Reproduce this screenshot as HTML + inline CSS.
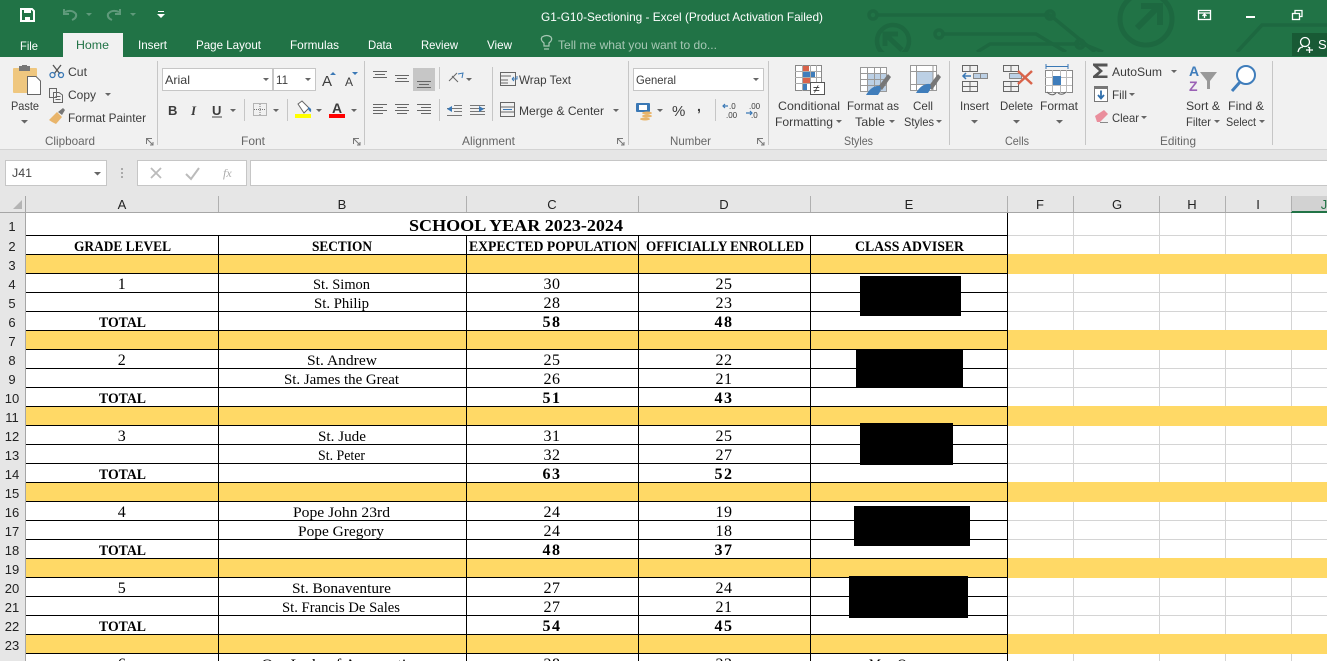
<!DOCTYPE html>
<html><head><meta charset="utf-8"><title>G1-G10-Sectioning - Excel</title>
<style>
html,body{margin:0;padding:0;width:1327px;height:661px;overflow:hidden;background:#fff}
svg{display:block}
text{font-family:"Liberation Sans",Arial,sans-serif;font-size:12px;fill:#444}
.t text{fill:#fff}
.r text{fill:#3c3c3c}
.l text{fill:#666}
.h text{fill:#222;font-size:13px;text-anchor:middle}
.n text{fill:#222;font-size:13px;text-anchor:middle}
.d text{font-family:"Liberation Serif",serif;font-size:15px;fill:#000;text-anchor:middle}
.d text:not([textLength]){font-size:16px;letter-spacing:.5px}
.d .b{font-weight:bold}
.d .b:not([textLength]){font-size:16px;letter-spacing:1.5px}
</style></head><body>
<svg xmlns="http://www.w3.org/2000/svg" width="1327" height="661" viewBox="0 0 1327 661">
<rect width="1327" height="661" fill="#fff"/>
<!-- title bar -->
<rect width="1327" height="57" fill="#217346"/>
<g fill="none" stroke="#1d6840" stroke-width="3.5">
<path d="M877 15H1050L1095 52"/><circle cx="873" cy="15" r="4"/><circle cx="1050" cy="15" r="4"/>
<path d="M943 34H1036L1066 52"/><circle cx="939" cy="34" r="4"/>
<path d="M977 52L990 44H1083L1103 52"/><circle cx="1080" cy="44" r="4"/>
<circle cx="893" cy="41" r="16" stroke-width="4.5"/>
<circle cx="1146" cy="19" r="26" stroke-width="5"/>
<path d="M1137 28L1157 8M1141 6H1160V25" stroke-width="6"/>
<path d="M886 35L902 50M885 46V34H898" stroke-width="5"/>
<path d="M1237 52L1262 25H1327"/>
</g>
<rect x="860" y="52" width="467" height="5" fill="#217346"/>
<!-- save -->
<g fill="none" stroke="#fff" stroke-width="2"><path d="M21 9H32L34 11V21H21Z"/></g>
<rect x="24" y="9" width="7" height="4" fill="#fff"/><rect x="25" y="17" width="5" height="4" fill="#fff"/>
<g fill="none" stroke="#5f9a7b" stroke-width="2"><path d="M65 12Q72 9 76 14Q77 18 72 20M64 9V14H69"/><path d="M119 12Q112 9 108 14Q107 18 112 20M120 9V14H115"/></g>
<g fill="#5f9a7b"><path d="M86 13h6l-3 3zM130 13h6l-3 3z"/></g>
<g fill="#fff"><rect x="158" y="11" width="6" height="1"/><path d="M157 14h8l-4 4z"/></g>
<g class="t">
<text x="541" y="21" textLength="282" lengthAdjust="spacingAndGlyphs">G1-G10-Sectioning - Excel (Product Activation Failed)</text>
<text x="20" y="50" textLength="18" lengthAdjust="spacingAndGlyphs">File</text>
<text x="138" y="49" textLength="29" lengthAdjust="spacingAndGlyphs">Insert</text>
<text x="196" y="49" textLength="65" lengthAdjust="spacingAndGlyphs">Page Layout</text>
<text x="290" y="49" textLength="49" lengthAdjust="spacingAndGlyphs">Formulas</text>
<text x="368" y="49" textLength="24" lengthAdjust="spacingAndGlyphs">Data</text>
<text x="421" y="49" textLength="37" lengthAdjust="spacingAndGlyphs">Review</text>
<text x="487" y="49" textLength="25" lengthAdjust="spacingAndGlyphs">View</text>
</g>
<rect x="63" y="33" width="60" height="24" fill="#f1f1f1"/>
<text x="76" y="49" textLength="33" lengthAdjust="spacingAndGlyphs" style="fill:#217346">Home</text>
<g fill="none" stroke="#a6c7b4" stroke-width="1.2"><path d="M544 46V43Q540 40 542 37Q547 34 551 37Q553 40 549 43V46ZM544 49H549"/></g>
<text x="558" y="49" textLength="159" lengthAdjust="spacingAndGlyphs" style="fill:#a6c7b4">Tell me what you want to do...</text>
<!-- window controls -->
<g fill="none" stroke="#fff" stroke-width="1.3"><rect x="1198.5" y="10.5" width="12" height="9"/><path d="M1198 13H1211"/><path d="M1204.500 18V14M1202.500 16L1204.500 14L1206.500 16"/>
<rect x="1292.500" y="13.500" width="7" height="6"/><path d="M1295 13V10.500H1302V16.500H1300"/></g>
<rect x="1246" y="16" width="9" height="2" fill="#fff"/>
<rect x="1292" y="33" width="35" height="23" fill="#185a35"/>
<g fill="none" stroke="#fff" stroke-width="1.300"><circle cx="1305" cy="42" r="4.500"/><path d="M1298 52Q1299 47 1303 47M1308 47L1310 48M1306 50H1313M1309.500 47V53"/></g>
<text x="1318" y="49" style="fill:#fff;font-size:13px">Sh</text>
<!-- ribbon -->
<rect y="57" width="1327" height="93" fill="#f1f1f1"/>
<rect y="149" width="1327" height="1" fill="#d3d3d3"/>
<rect y="150" width="1327" height="62" fill="#e6e6e6"/>
<g fill="#c6c6c6"><rect x="157" y="61" width="1" height="84"/><rect x="364" y="61" width="1" height="84"/><rect x="628" y="61" width="1" height="84"/><rect x="768" y="61" width="1" height="84"/><rect x="949" y="61" width="1" height="84"/><rect x="1085" y="61" width="1" height="84"/><rect x="1272" y="61" width="1" height="84"/>
<rect x="244" y="99" width="1" height="22"/><rect x="287" y="99" width="1" height="22"/><rect x="439" y="67" width="1" height="22"/><rect x="439" y="99" width="1" height="22"/><rect x="492" y="67" width="1" height="54"/><rect x="715" y="99" width="1" height="22"/></g>
<!-- combos -->
<g fill="#fff" stroke="#c6c6c6"><rect x="162.500" y="68.500" width="110" height="22"/><rect x="273.500" y="68.500" width="42" height="22"/><rect x="633.500" y="68.500" width="130" height="22"/></g>
<rect x="5.500" y="160.500" width="101" height="25" fill="#fff" stroke="#c6c6c6"/>
<!-- clipboard icons -->
<rect x="13" y="68" width="24" height="25" rx="1" fill="#efc77f"/><rect x="19" y="66" width="11" height="5" fill="#777"/><rect x="22" y="65" width="5" height="2" fill="#777"/>
<path d="M27.500 76.500H36L40.500 81V94.500H27.500Z" fill="#fff" stroke="#666"/>
<g fill="none" stroke="#555" stroke-width="1.300"><path d="M53 65L60 74M61 65L54 74"/></g>
<g fill="none" stroke="#3a78b5" stroke-width="1.300"><circle cx="52.500" cy="75" r="2.500"/><circle cx="61" cy="75" r="2.500"/></g>
<g fill="none" stroke="#666"><rect x="49.500" y="88.500" width="7" height="9"/><path d="M53.500 92.500H59L62.500 95V102.500H53.500ZM55.500 96.500H60.500M55.500 99.500H60.500"/></g>
<path d="M49 120L57 112L62 117L56 124L52 122Z" fill="#e9b56b"/><path d="M58 112L63 108L65 110L62 115Z" fill="#777"/>
<g class="r">
<text x="11" y="110" textLength="28" lengthAdjust="spacingAndGlyphs">Paste</text>
<text x="68" y="76" textLength="19" lengthAdjust="spacingAndGlyphs">Cut</text>
<text x="68" y="99" textLength="28" lengthAdjust="spacingAndGlyphs">Copy</text>
<text x="68" y="122" textLength="78" lengthAdjust="spacingAndGlyphs">Format Painter</text>
<text x="165" y="84" textLength="25" lengthAdjust="spacingAndGlyphs">Arial</text>
<text x="276" y="84" textLength="12" lengthAdjust="spacingAndGlyphs">11</text>
<text x="636" y="84" textLength="40" lengthAdjust="spacingAndGlyphs">General</text>
<text x="519" y="84" textLength="52" lengthAdjust="spacingAndGlyphs">Wrap Text</text>
<text x="519" y="115" textLength="85" lengthAdjust="spacingAndGlyphs">Merge &amp; Center</text>
<text x="778" y="110" textLength="62" lengthAdjust="spacingAndGlyphs">Conditional</text>
<text x="775" y="126" textLength="58" lengthAdjust="spacingAndGlyphs">Formatting</text>
<text x="847" y="110" textLength="52" lengthAdjust="spacingAndGlyphs">Format as</text>
<text x="855" y="126" textLength="30" lengthAdjust="spacingAndGlyphs">Table</text>
<text x="913" y="110" textLength="20" lengthAdjust="spacingAndGlyphs">Cell</text>
<text x="904" y="126" textLength="30" lengthAdjust="spacingAndGlyphs">Styles</text>
<text x="960" y="110" textLength="29" lengthAdjust="spacingAndGlyphs">Insert</text>
<text x="1000" y="110" textLength="33" lengthAdjust="spacingAndGlyphs">Delete</text>
<text x="1040" y="110" textLength="38" lengthAdjust="spacingAndGlyphs">Format</text>
<text x="1112" y="76" textLength="50" lengthAdjust="spacingAndGlyphs">AutoSum</text>
<text x="1112" y="99" textLength="15" lengthAdjust="spacingAndGlyphs">Fill</text>
<text x="1112" y="122" textLength="27" lengthAdjust="spacingAndGlyphs">Clear</text>
<text x="1186" y="110" textLength="34" lengthAdjust="spacingAndGlyphs">Sort &amp;</text>
<text x="1186" y="126" textLength="25" lengthAdjust="spacingAndGlyphs">Filter</text>
<text x="1228" y="110" textLength="36" lengthAdjust="spacingAndGlyphs">Find &amp;</text>
<text x="1226" y="126" textLength="30" lengthAdjust="spacingAndGlyphs">Select</text>
</g>
<g class="l">
<text x="45" y="145" textLength="50" lengthAdjust="spacingAndGlyphs">Clipboard</text>
<text x="241" y="145" textLength="24" lengthAdjust="spacingAndGlyphs">Font</text>
<text x="462" y="145" textLength="53" lengthAdjust="spacingAndGlyphs">Alignment</text>
<text x="670" y="145" textLength="41" lengthAdjust="spacingAndGlyphs">Number</text>
<text x="844" y="145" textLength="29" lengthAdjust="spacingAndGlyphs">Styles</text>
<text x="1005" y="145" textLength="24" lengthAdjust="spacingAndGlyphs">Cells</text>
<text x="1160" y="145" textLength="36" lengthAdjust="spacingAndGlyphs">Editing</text>
</g>
<!-- carets -->
<g fill="#666"><path d="M21 120h7l-3.500 3.500zM105 93h6l-3 3zM263 78h6l-3 3zM305 78h6l-3 3zM230 109h6l-3 3zM273 109h6l-3 3zM316 109h6l-3 3zM351 109h6l-3 3zM466 78h6l-3 3zM613 109h6l-3 3zM753 78h6l-3 3zM657 109h6l-3 3zM836 120h6l-3 3zM889 120h6l-3 3zM936 120h6l-3 3zM971 120h7l-3.500 3.500zM1013 120h7l-3.500 3.500zM1056 120h7l-3.500 3.500zM1171 70h6l-3 3zM1129 93h6l-3 3zM1141 116h6l-3 3zM1214 120h6l-3 3zM1259 120h6l-3 3zM94 172h7l-3.500 3.500z"/></g>
<!-- launchers -->
<g fill="none" stroke="#777"><path d="M146.500 144V138.500H152M147 139L153 145M153 142V145H150"/><path d="M353.500 144V138.500H359M354 139L360 145M360 142V145H357"/><path d="M617.500 144V138.500H623M618 139L624 145M624 142V145H621"/><path d="M757.500 144V138.500H763M758 139L764 145M764 142V145H761"/></g>
<!-- font group icons -->
<g class="r" style="font-weight:bold">
<text x="322" y="86" style="font-size:15px;font-weight:normal">A</text><text x="345" y="86" style="font-size:12px;font-weight:normal">A</text>
<text x="168" y="115" style="font-size:13px">B</text><text x="191" y="115" style="font-size:13px;font-style:italic;font-family:'Liberation Serif',serif">I</text><text x="212" y="115" style="font-size:13px">U</text>
<text x="332" y="113" style="font-size:14px">A</text>
<text x="672" y="116" style="font-size:15px;font-weight:normal">%</text><text x="697" y="111" style="font-size:14px">,</text>
</g>
<g fill="#3a78b5"><path d="M330 75l3-3 3 3zM352 72h6l-3 3z"/></g>
<rect x="212" y="116.500" width="10" height="1" fill="#444"/>
<g fill="none" stroke="#777" stroke-dasharray="1 1"><rect x="253.500" y="103.500" width="13" height="12"/><path d="M260 104V115M254 109.500H266"/></g>
<path d="M298 104L302 101L309 108L304 113Z" fill="#fff" stroke="#666"/><path d="M308 107q4 1 3 5q-3-1-3-5z" fill="#3a78b5"/>
<rect x="295" y="114" width="16" height="4" fill="#ff0"/><rect x="329" y="114" width="16" height="4" fill="#f00"/>
<!-- alignment icons -->
<rect x="413" y="68" width="22" height="23" fill="#c6c6c6"/>
<g fill="none" stroke="#666"><path d="M373 71.500H387M375 74.500H385M373 77.500H387M395 75.500H409M397 78.500H407M395 81.500H409M417 81.500H431M419 84.500H429M417 87.500H431"/>
<path d="M373 104.500H387M373 107.500H383M373 110.500H387M373 113.500H383M395 104.500H409M397 107.500H407M395 110.500H409M397 113.500H407M417 104.500H431M421 107.500H431M417 110.500H431M421 113.500H431"/>
<path d="M447 108.500H462M454 105.500H462M454 111.500H462M447 115.500H462M470 105.500H485M470 108.500H485M470 111.500H485M470 114.500H485" stroke="#777"/>
<path d="M449 81L457 73M452 76L458 82"/><path d="M458 74L463 73L462 78" stroke="#3a78b5"/></g>
<g fill="#3a78b5"><path d="M447 109L452 106V112ZM484 109L479 106V112Z"/></g>
<g fill="none" stroke="#666"><rect x="500.500" y="72.500" width="15" height="13"/><path d="M500 76H511M500 80H508M500 83H508"/><rect x="500.500" y="102.500" width="14" height="14"/><path d="M500 107H515M500 112H515"/></g>
<path d="M512 79H517V76M512 79L514 77M512 79L514 81" fill="none" stroke="#3a78b5"/>
<path d="M503 109.500H512" stroke="#3a78b5"/>
<!-- number icons -->
<rect x="636" y="103" width="14" height="9" rx="1" fill="#3a78b5"/><rect x="639" y="105" width="8" height="5" fill="#fff"/>
<ellipse cx="647" cy="113" rx="5" ry="1.500" fill="#e9b56b"/><ellipse cx="647" cy="116" rx="5" ry="1.500" fill="#e9b56b"/><ellipse cx="645" cy="119" rx="5" ry="1.500" fill="#e9b56b"/>
<g class="r"><text x="729" y="109" style="font-size:8px">.0</text><text x="726" y="118" style="font-size:8px">.00</text><text x="749" y="109" style="font-size:8px">.00</text><text x="751" y="118" style="font-size:8px">.0</text></g>
<path d="M728 106H723M725 104L723 106L725 108M746 113H752M750 111L752 113L750 115" fill="none" stroke="#3a78b5" stroke-width="1.200"/>
<!-- styles icons -->
<g fill="#fff" stroke="#888"><rect x="795.500" y="65.500" width="26" height="25"/></g>
<g fill="#d9634a"><rect x="803" y="66" width="6" height="5"/><rect x="803" y="78" width="8" height="5"/></g>
<g fill="#3f7dbb"><rect x="803" y="72" width="12" height="5"/><rect x="803" y="84" width="4" height="6"/></g>
<path d="M795 71.500H821M795 77.500H821M795 83.500H821M802.500 65V91M810.500 65V91M816.500 65V91" stroke="#aaa" fill="none"/>
<rect x="810.500" y="82.500" width="14" height="12" fill="#fff" stroke="#555"/><text x="813" y="93" style="font-size:12px;fill:#333">≠</text>
<rect x="860.500" y="67.500" width="26" height="24" fill="#fff" stroke="#999"/><rect x="868" y="74" width="18" height="17" fill="#bcd0e5"/>
<path d="M860 73.500H887M860 79.500H887M860 85.500H887M867.500 67V92M874.500 67V92M880.500 67V92" stroke="#999" fill="none"/>
<path d="M878 87L888 74L891 77L882 90Z" fill="#777"/><path d="M866 95Q872 85 880 86Q882 90 878 95Z" fill="#3f7dbb"/>
<rect x="910.500" y="65.500" width="26" height="25" fill="#fff" stroke="#999"/><rect x="916" y="71" width="17" height="13" fill="#bcd0e5"/>
<path d="M910 71.500H937M916.500 66V91M910 84.500H937M933 66V91" stroke="#999" fill="none"/>
<path d="M928 87L938 74L941 77L932 90Z" fill="#777"/><path d="M916 93Q922 83 930 84Q932 88 928 93Z" fill="#3f7dbb"/>
<!-- cells icons -->
<g fill="none" stroke="#666" stroke-width="1"><path d="M962.500 65.500H977.500V71.500H962.500ZM970 65V71"/><path d="M962.500 81.500H977.500V91.500H962.500ZM962 86.500H977M970 81V91"/></g>
<rect x="973.500" y="73.500" width="14" height="5" fill="#bcd0e5" stroke="#888"/><path d="M980.500 73V79" stroke="#888"/>
<path d="M971 76H963M966 73L963 76L966 79" fill="none" stroke="#3a78b5" stroke-width="1.500"/>
<g fill="none" stroke="#666"><path d="M1003.500 65.500H1018.500V71.500H1003.500ZM1011 65V71"/><path d="M1003.500 81.500H1018.500V91.500H1003.500ZM1003 86.500H1018M1011 81V91"/></g>
<rect x="1009.500" y="73.500" width="12" height="5" fill="#bcd0e5" stroke="#888"/>
<path d="M1018 71L1032 84M1032 71L1018 84" stroke="#d9634a" stroke-width="2.500"/>
<rect x="1045.500" y="70.500" width="27" height="22" fill="#fff" stroke="#888"/><path d="M1045 77.500H1072M1045 85.500H1072M1052.500 70V93M1060.500 70V93M1066.500 70V93" stroke="#bbb"/>
<rect x="1053" y="76" width="8" height="9" fill="#3f7dbb"/>
<path d="M1046 66.500H1068M1046 64V69M1068 64V69" stroke="#3a78b5" fill="none"/>
<path d="M1047 92Q1052 97 1056 93M1058 93Q1062 96 1066 92" stroke="#666" fill="none"/>
<!-- editing icons -->
<path d="M1093 63.500H1107.500V66.500H1098L1103 71L1098 75.500H1107.500V78H1093V76L1099 71L1093 65.500Z" fill="#555"/>
<rect x="1094.500" y="86.500" width="13" height="15" fill="#fff" stroke="#777"/><rect x="1094" y="86" width="14" height="3" fill="#777"/>
<path d="M1101 90.500V98M1098 95L1101 98.500L1104 95" fill="none" stroke="#2f6eab" stroke-width="1.800"/>
<path d="M1095 116L1104 110L1108 114L1100 122H1097Z" fill="#ea8e9c"/><path d="M1100 122.500H1108" stroke="#888"/>
<text x="1189" y="76" style="font-size:14px;font-weight:bold;fill:#3f7dbb">A</text><text x="1189" y="91" style="font-size:14px;font-weight:bold;fill:#9a61b5">Z</text>
<path d="M1200 72H1217L1210 81V89H1207V81Z" fill="#999"/>
<circle cx="1246" cy="75" r="9" fill="#fff" stroke="#3f7dbb" stroke-width="2"/><path d="M1240 82L1232 91" stroke="#3f7dbb" stroke-width="3"/>
<!-- formula bar -->
<text x="12" y="177" textLength="20" lengthAdjust="spacingAndGlyphs" style="fill:#444">J41</text>
<g fill="#aaa"><rect x="121" y="168" width="2" height="2"/><rect x="121" y="172" width="2" height="2"/><rect x="121" y="176" width="2" height="2"/></g>
<rect x="137.500" y="160.500" width="109" height="25" fill="#fff" stroke="#c6c6c6"/>
<path d="M151 168L161 178M161 168L151 178" stroke="#bbb" stroke-width="1.800"/>
<path d="M186 174L191 179L199 168" fill="none" stroke="#bbb" stroke-width="2"/>
<text x="223" y="177" style="font-family:'Liberation Serif',serif;font-style:italic;font-size:12px;fill:#aaa">fx</text>
<rect x="250.500" y="160.500" width="1080" height="25" fill="#fff" stroke="#c6c6c6"/>
<!-- sheet -->
<rect x="0" y="212" width="25" height="449" fill="#e6e6e6"/>
<rect x="25" y="213" width="1302" height="448" fill="#fff"/>
<rect x="1291" y="196" width="36" height="16" fill="#d2d2d2"/>
<rect x="0" y="212" width="1327" height="1" fill="#a6a6a6"/>
<rect x="1291" y="211" width="36" height="2" fill="#217346"/>
<rect x="25" y="196" width="1" height="465" fill="#a6a6a6"/>
<path d="M22 200V209H13Z" fill="#b4b4b4"/>
<g fill="#b0b0b0"><rect x="218" y="196" width="1" height="16"/><rect x="466" y="196" width="1" height="16"/><rect x="638" y="196" width="1" height="16"/><rect x="810" y="196" width="1" height="16"/><rect x="1007" y="196" width="1" height="16"/><rect x="1073" y="196" width="1" height="16"/><rect x="1159" y="196" width="1" height="16"/><rect x="1225" y="196" width="1" height="16"/><rect x="1291" y="196" width="1" height="16"/></g>
<!-- yellow -->
<g fill="#ffd966"><rect x="26" y="254" width="1301" height="20"/><rect x="26" y="330" width="1301" height="20"/><rect x="26" y="406" width="1301" height="20"/><rect x="26" y="482" width="1301" height="20"/><rect x="26" y="558" width="1301" height="20"/><rect x="26" y="634" width="1301" height="20"/></g>
<!-- light grid -->
<g fill="#d4d4d4">
<rect x="1073" y="213" width="1" height="41"/><rect x="1159" y="213" width="1" height="41"/><rect x="1225" y="213" width="1" height="41"/><rect x="1291" y="213" width="1" height="41"/>
<rect x="1073" y="274" width="1" height="56"/><rect x="1159" y="274" width="1" height="56"/><rect x="1225" y="274" width="1" height="56"/><rect x="1291" y="274" width="1" height="56"/>
<rect x="1073" y="350" width="1" height="56"/><rect x="1159" y="350" width="1" height="56"/><rect x="1225" y="350" width="1" height="56"/><rect x="1291" y="350" width="1" height="56"/>
<rect x="1073" y="426" width="1" height="56"/><rect x="1159" y="426" width="1" height="56"/><rect x="1225" y="426" width="1" height="56"/><rect x="1291" y="426" width="1" height="56"/>
<rect x="1073" y="502" width="1" height="56"/><rect x="1159" y="502" width="1" height="56"/><rect x="1225" y="502" width="1" height="56"/><rect x="1291" y="502" width="1" height="56"/>
<rect x="1073" y="578" width="1" height="56"/><rect x="1159" y="578" width="1" height="56"/><rect x="1225" y="578" width="1" height="56"/><rect x="1291" y="578" width="1" height="56"/>
<rect x="1073" y="654" width="1" height="7"/><rect x="1159" y="654" width="1" height="7"/><rect x="1225" y="654" width="1" height="7"/><rect x="1291" y="654" width="1" height="7"/>
<rect x="1008" y="235" width="319" height="1"/><rect x="1008" y="292" width="319" height="1"/><rect x="1008" y="311" width="319" height="1"/><rect x="1008" y="368" width="319" height="1"/><rect x="1008" y="387" width="319" height="1"/><rect x="1008" y="444" width="319" height="1"/><rect x="1008" y="463" width="319" height="1"/><rect x="1008" y="520" width="319" height="1"/><rect x="1008" y="539" width="319" height="1"/><rect x="1008" y="596" width="319" height="1"/><rect x="1008" y="615" width="319" height="1"/>
</g>
<!-- black grid -->
<g fill="#000">
<rect x="26" y="235" width="981" height="1"/><rect x="26" y="254" width="981" height="1"/><rect x="26" y="273" width="981" height="1"/><rect x="26" y="292" width="981" height="1"/><rect x="26" y="311" width="981" height="1"/><rect x="26" y="330" width="981" height="1"/><rect x="26" y="349" width="981" height="1"/><rect x="26" y="368" width="981" height="1"/><rect x="26" y="387" width="981" height="1"/><rect x="26" y="406" width="981" height="1"/><rect x="26" y="425" width="981" height="1"/><rect x="26" y="444" width="981" height="1"/><rect x="26" y="463" width="981" height="1"/><rect x="26" y="482" width="981" height="1"/><rect x="26" y="501" width="981" height="1"/><rect x="26" y="520" width="981" height="1"/><rect x="26" y="539" width="981" height="1"/><rect x="26" y="558" width="981" height="1"/><rect x="26" y="577" width="981" height="1"/><rect x="26" y="596" width="981" height="1"/><rect x="26" y="615" width="981" height="1"/><rect x="26" y="634" width="981" height="1"/><rect x="26" y="653" width="981" height="1"/>
<rect x="218" y="235" width="1" height="426"/><rect x="466" y="235" width="1" height="426"/><rect x="638" y="235" width="1" height="426"/><rect x="810" y="235" width="1" height="426"/><rect x="1007" y="213" width="1" height="448"/>
</g>
<!-- headers -->
<g class="h">
<text x="122" y="209">A</text><text x="342" y="209">B</text><text x="552" y="209">C</text><text x="724" y="209">D</text><text x="909" y="209">E</text><text x="1040" y="209">F</text><text x="1117" y="209">G</text><text x="1192" y="209">H</text><text x="1258" y="209">I</text><text x="1324" y="209" style="fill:#217346">J</text>
</g>
<g class="n">
<text x="12" y="231">1</text><text x="12" y="251">2</text><text x="12" y="270">3</text><text x="12" y="289">4</text><text x="12" y="308">5</text><text x="12" y="327">6</text><text x="12" y="346">7</text><text x="12" y="365">8</text><text x="12" y="384">9</text><text x="12" y="403">10</text><text x="12" y="422">11</text><text x="12" y="441">12</text><text x="12" y="460">13</text><text x="12" y="479">14</text><text x="12" y="498">15</text><text x="12" y="517">16</text><text x="12" y="536">17</text><text x="12" y="555">18</text><text x="12" y="574">19</text><text x="12" y="593">20</text><text x="12" y="612">21</text><text x="12" y="631">22</text><text x="12" y="650">23</text>
</g>
<!-- data -->
<g class="d">
<text class="b" x="516" y="231" style="font-size:17px" textLength="214" lengthAdjust="spacingAndGlyphs">SCHOOL YEAR 2023-2024</text>
<text class="b" x="122.500" y="251" textLength="97" lengthAdjust="spacingAndGlyphs">GRADE LEVEL</text>
<text class="b" x="342" y="251" textLength="60" lengthAdjust="spacingAndGlyphs">SECTION</text>
<text class="b" x="553" y="251" textLength="168" lengthAdjust="spacingAndGlyphs">EXPECTED POPULATION</text>
<text class="b" x="725" y="251" textLength="158" lengthAdjust="spacingAndGlyphs">OFFICIALLY ENROLLED</text>
<text class="b" x="909.500" y="251" textLength="109" lengthAdjust="spacingAndGlyphs">CLASS ADVISER</text>

<text x="122" y="289">1</text><text x="341.500" y="289" textLength="57" lengthAdjust="spacingAndGlyphs">St. Simon</text><text x="552" y="289">30</text><text x="724" y="289">25</text>
<text x="341.500" y="308" textLength="55" lengthAdjust="spacingAndGlyphs">St. Philip</text><text x="552" y="308">28</text><text x="724" y="308">23</text>
<text class="b" x="122.500" y="327" textLength="47" lengthAdjust="spacingAndGlyphs">TOTAL</text><text class="b" x="552" y="327">58</text><text class="b" x="724" y="327">48</text>

<text x="122" y="365">2</text><text x="342" y="365" textLength="70" lengthAdjust="spacingAndGlyphs">St. Andrew</text><text x="552" y="365">25</text><text x="724" y="365">22</text>
<text x="341.500" y="384" textLength="115" lengthAdjust="spacingAndGlyphs">St. James the Great</text><text x="552" y="384">26</text><text x="724" y="384">21</text>
<text class="b" x="122.500" y="403" textLength="47" lengthAdjust="spacingAndGlyphs">TOTAL</text><text class="b" x="552" y="403">51</text><text class="b" x="724" y="403">43</text>

<text x="122" y="441">3</text><text x="342" y="441" textLength="48" lengthAdjust="spacingAndGlyphs">St. Jude</text><text x="552" y="441">31</text><text x="724" y="441">25</text>
<text x="341.500" y="460" textLength="47" lengthAdjust="spacingAndGlyphs">St. Peter</text><text x="552" y="460">32</text><text x="724" y="460">27</text>
<text class="b" x="122.500" y="479" textLength="47" lengthAdjust="spacingAndGlyphs">TOTAL</text><text class="b" x="552" y="479">63</text><text class="b" x="724" y="479">52</text>

<text x="122" y="517">4</text><text x="341.500" y="517" textLength="97" lengthAdjust="spacingAndGlyphs">Pope John 23rd</text><text x="552" y="517">24</text><text x="724" y="517">19</text>
<text x="341" y="536" textLength="86" lengthAdjust="spacingAndGlyphs">Pope Gregory</text><text x="552" y="536">24</text><text x="724" y="536">18</text>
<text class="b" x="122.500" y="555" textLength="47" lengthAdjust="spacingAndGlyphs">TOTAL</text><text class="b" x="552" y="555">48</text><text class="b" x="724" y="555">37</text>

<text x="122" y="593">5</text><text x="341.500" y="593" textLength="99" lengthAdjust="spacingAndGlyphs">St. Bonaventure</text><text x="552" y="593">27</text><text x="724" y="593">24</text>
<text x="341" y="612" textLength="118" lengthAdjust="spacingAndGlyphs">St. Francis De Sales</text><text x="552" y="612">27</text><text x="724" y="612">21</text>
<text class="b" x="122.500" y="631" textLength="47" lengthAdjust="spacingAndGlyphs">TOTAL</text><text class="b" x="552" y="631">54</text><text class="b" x="724" y="631">45</text>

<text x="122" y="669">6</text><text x="342" y="669" textLength="161" lengthAdjust="spacingAndGlyphs">Our Lady of Assumption</text><text x="552" y="669">28</text><text x="724" y="669">23</text><text x="888" y="669" textLength="38" lengthAdjust="spacingAndGlyphs">Mrs. O</text>
</g>
<!-- redactions -->
<g fill="#000"><rect x="860" y="276" width="101" height="40"/><rect x="856" y="350" width="107" height="38"/><rect x="860" y="423" width="93" height="42"/><rect x="854" y="506" width="116" height="40"/><rect x="849" y="576" width="119" height="42"/></g>
</svg>
</body></html>
